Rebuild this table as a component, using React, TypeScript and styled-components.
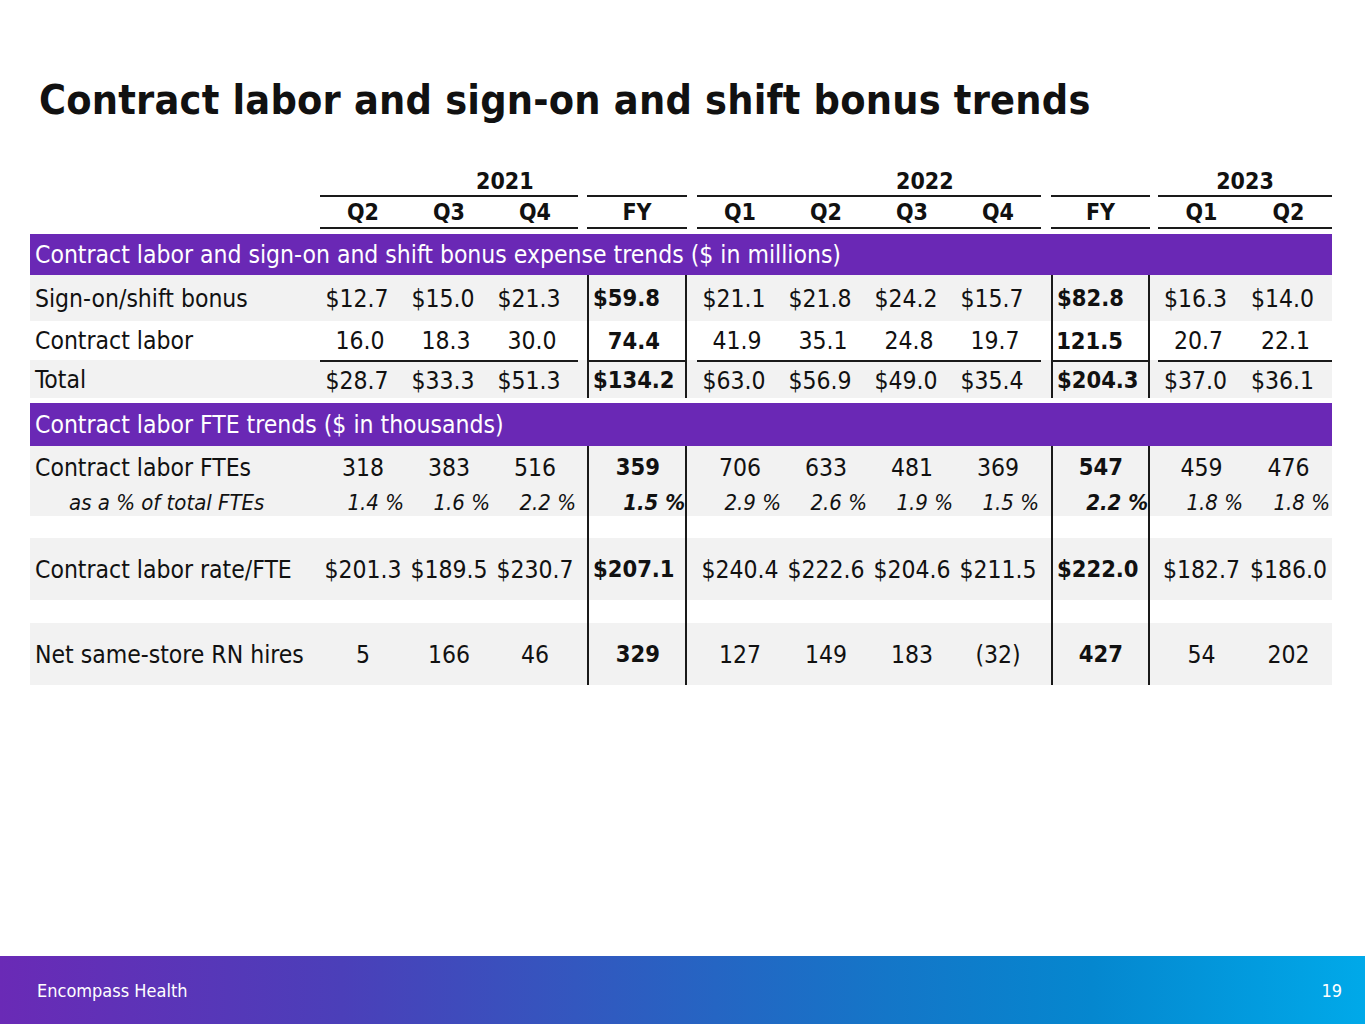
import React from "react";
import styled, { createGlobalStyle, css } from "styled-components";

const GlobalStyle = createGlobalStyle`
  html, body { margin: 0; padding: 0; background: #ffffff; }
  body {
    font-family: "DejaVu Sans Condensed", "DejaVu Sans", sans-serif;
    font-stretch: condensed;
    color: #111111;
  }
`;

const COLS =
  "290px 86px 86px 86px 9px 100px 10px 86px 86px 86px 86px 10px 99px 8px 87px 87px";

const Page = styled.div`
  width: 1365px;
  height: 1024px;
  display: flex;
  flex-direction: column;
  overflow: hidden;
`;

const Title = styled.h1`
  margin: 0;
  padding: 73px 0 0 39px;
  font-size: 41px;
  line-height: 54px;
  font-weight: 700;
  color: #111111;
  letter-spacing: 0.2px;
`;

const Table = styled.div`
  margin: 39px 0 0 30px;
  width: 1302px;
  display: flex;
  flex-direction: column;
`;

const Row = styled.div<{ $h: number; $bg?: string }>`
  display: grid;
  grid-template-columns: ${COLS};
  height: ${(p) => p.$h}px;
  background: ${(p) => p.$bg ?? "transparent"};
`;

type Align = "left" | "center" | "right";

const Cell = styled.div<{
  $align?: Align;
  $bold?: boolean;
  $italic?: boolean;
  $top?: boolean;
  $bottom?: boolean;
  $box?: boolean;
  $span?: number;
  $pl?: number;
  $pr?: number;
  $size?: number;
}>`
  display: flex;
  align-items: center;
  justify-content: ${(p) =>
    p.$align === "left" ? "flex-start" : p.$align === "right" ? "flex-end" : "center"};
  padding-left: ${(p) => p.$pl ?? 0}px;
  padding-right: ${(p) => p.$pr ?? 0}px;
  font-size: ${(p) => p.$size ?? 24.5}px;
  font-weight: ${(p) => (p.$bold ? 700 : 400)};
  font-style: ${(p) => (p.$italic ? "italic" : "normal")};
  white-space: nowrap;
  box-sizing: border-box;
  min-width: 0;
  ${(p) => p.$span && css`grid-column: span ${p.$span};`}
  ${(p) => p.$top && css`border-top: 2px solid #1a1a1a;`}
  ${(p) => p.$bottom && css`border-bottom: 2px solid #1a1a1a;`}
  ${(p) =>
    p.$box &&
    css`
      border-left: 2px solid #1a1a1a;
      border-right: 2px solid #1a1a1a;
    `}
`;

const HeadCell = styled(Cell).attrs({ $bold: true, $size: 23 })``;

const Band = styled.div<{ $h: number; $mt: number }>`
  height: ${(p) => p.$h}px;
  margin-top: ${(p) => p.$mt}px;
  background: #6a28b5;
  color: #ffffff;
  display: flex;
  align-items: center;
  padding-left: 5px;
  font-size: 24.5px;
`;

const Footer = styled.footer`
  margin-top: auto;
  height: 68px;
  display: flex;
  align-items: center;
  justify-content: space-between;
  padding: 0 23px 0 37px;
  color: #ffffff;
  font-size: 18px;
  background: linear-gradient(
    90deg,
    #6a2ab6 0%,
    #4b3fb9 25%,
    #2f5bc0 45%,
    #1476c8 65%,
    #0587cf 80%,
    #00a9e9 100%
  );
`;

type Kind = "plain" | "pct";

const fyAlign = (v: string, kind: Kind): { $align: Align; $pl?: number; $pr?: number } => {
  if (kind === "pct") return { $align: "right", $pr: 0 };
  if (v.startsWith("$")) return { $align: "left", $pl: 4 };
  return { $align: "right", $pr: 25 };
};

const qPad = (v: string): number => {
  if (v.startsWith("$") && v.length === 5) return 12;
  if (v.includes(".") && !v.startsWith("$")) return 6;
  return 0;
};

// 11 values: Q2,Q3,Q4 (2021), FY21, Q1..Q4 (2022), FY22, Q1,Q2 (2023)
const ValueCells: React.FC<{
  values: string[];
  kind: Kind;
  topLine?: boolean;
  size?: number;
}> = ({ values, kind, topLine, size }) => {
  const q = (v: string, key: string) =>
    kind === "pct" ? (
      <Cell key={key} $align="right" $pr={2} $italic $top={topLine} $size={size}>
        {v}
      </Cell>
    ) : (
      <Cell key={key} $pr={qPad(v)} $top={topLine} $size={size}>
        {v}
      </Cell>
    );
  const fy = (v: string, key: string) => (
    <Cell
      key={key}
      $box
      $bold
      $italic={kind === "pct"}
      $top={topLine}
      $size={kind === "pct" ? size : 23.5}
      {...fyAlign(v, kind)}
    >
      {v}
    </Cell>
  );
  return (
    <>
      {q(values[0], "a")}
      {q(values[1], "b")}
      {q(values[2], "c")}
      <Cell />
      {fy(values[3], "d")}
      <Cell />
      {q(values[4], "e")}
      {q(values[5], "f")}
      {q(values[6], "g")}
      {q(values[7], "h")}
      <Cell />
      {fy(values[8], "i")}
      <Cell />
      {q(values[9], "j")}
      {q(values[10], "k")}
    </>
  );
};

const DataRow: React.FC<{
  label: string;
  values: string[];
  h: number;
  bg?: string;
  kind?: Kind;
  topLine?: boolean;
  italicLabel?: boolean;
  labelIndent?: number;
  size?: number;
}> = ({ label, values, h, bg, kind = "plain", topLine, italicLabel, labelIndent = 5, size }) => (
  <Row $h={h} $bg={bg}>
    <Cell $align="left" $pl={labelIndent} $italic={italicLabel} $size={size}>
      {label}
    </Cell>
    <ValueCells values={values} kind={kind} topLine={topLine} size={size} />
  </Row>
);

const GapRow: React.FC<{ h: number }> = ({ h }) => (
  <Row $h={h}>
    <Cell />
    <Cell />
    <Cell />
    <Cell />
    <Cell />
    <Cell $box />
    <Cell />
    <Cell />
    <Cell />
    <Cell />
    <Cell />
    <Cell />
    <Cell $box />
    <Cell />
    <Cell />
    <Cell />
  </Row>
);

const GRAY = "#f2f2f2";

export default function App() {
  return (
    <Page>
      <GlobalStyle />
      <Title>Contract labor and sign-on and shift bonus trends</Title>
      <Table>
        <Row $h={31}>
          <Cell />
          <HeadCell $span={3} $bottom $align="left" $pl={156}>
            2021
          </HeadCell>
          <Cell />
          <Cell $bottom />
          <Cell />
          <HeadCell $span={4} $bottom $align="left" $pl={199}>
            2022
          </HeadCell>
          <Cell />
          <Cell $bottom />
          <Cell />
          <HeadCell $span={2} $bottom>
            2023
          </HeadCell>
        </Row>
        <Row $h={32}>
          <Cell />
          {["Q2", "Q3", "Q4"].map((q) => (
            <HeadCell key={"a" + q} $bottom>
              {q}
            </HeadCell>
          ))}
          <Cell />
          <HeadCell $bottom>FY</HeadCell>
          <Cell />
          {["Q1", "Q2", "Q3", "Q4"].map((q) => (
            <HeadCell key={"b" + q} $bottom>
              {q}
            </HeadCell>
          ))}
          <Cell />
          <HeadCell $bottom>FY</HeadCell>
          <Cell />
          {["Q1", "Q2"].map((q) => (
            <HeadCell key={"c" + q} $bottom>
              {q}
            </HeadCell>
          ))}
        </Row>

        <Band $h={41} $mt={5}>
          Contract labor and sign-on and shift bonus expense trends ($ in millions)
        </Band>
        <DataRow
          h={46}
          bg={GRAY}
          label="Sign-on/shift bonus"
          values={["$12.7", "$15.0", "$21.3", "$59.8", "$21.1", "$21.8", "$24.2", "$15.7", "$82.8", "$16.3", "$14.0"]}
        />
        <DataRow
          h={39}
          label="Contract labor"
          values={["16.0", "18.3", "30.0", "74.4", "41.9", "35.1", "24.8", "19.7", "121.5", "20.7", "22.1"]}
        />
        <DataRow
          h={38}
          bg={GRAY}
          topLine
          label="Total"
          values={["$28.7", "$33.3", "$51.3", "$134.2", "$63.0", "$56.9", "$49.0", "$35.4", "$204.3", "$37.0", "$36.1"]}
        />

        <Band $h={43} $mt={5}>
          Contract labor FTE trends ($ in thousands)
        </Band>
        <DataRow
          h={42}
          bg={GRAY}
          label="Contract labor FTEs"
          values={["318", "383", "516", "359", "706", "633", "481", "369", "547", "459", "476"]}
        />
        <DataRow
          h={28}
          bg={GRAY}
          kind="pct"
          italicLabel
          labelIndent={39}
          size={22}
          label="as a % of total FTEs"
          values={["1.4 %", "1.6 %", "2.2 %", "1.5 %", "2.9 %", "2.6 %", "1.9 %", "1.5 %", "2.2 %", "1.8 %", "1.8 %"]}
        />
        <GapRow h={22} />
        <DataRow
          h={62}
          bg={GRAY}
          label="Contract labor rate/FTE"
          values={["$201.3", "$189.5", "$230.7", "$207.1", "$240.4", "$222.6", "$204.6", "$211.5", "$222.0", "$182.7", "$186.0"]}
        />
        <GapRow h={23} />
        <DataRow
          h={62}
          bg={GRAY}
          label="Net same-store RN hires"
          values={["5", "166", "46", "329", "127", "149", "183", "(32)", "427", "54", "202"]}
        />
      </Table>
      <Footer>
        <span>Encompass Health</span>
        <span>19</span>
      </Footer>
    </Page>
  );
}
